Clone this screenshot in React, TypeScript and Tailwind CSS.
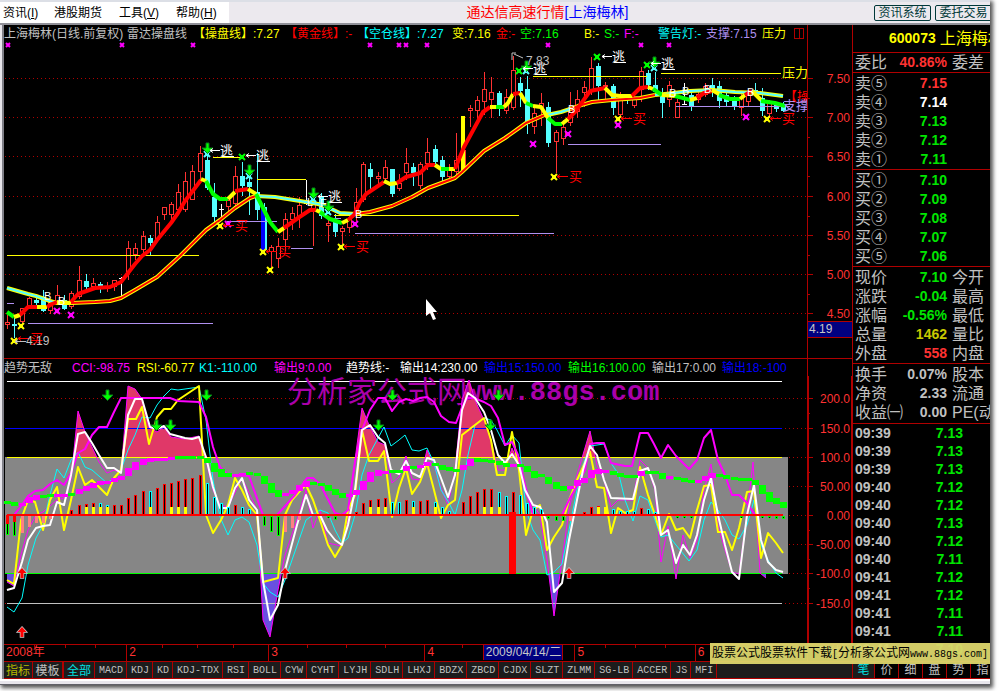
import type { ReactNode } from "react";
import clsx from "clsx";

const RED = "#b00000";
const CYAN = "#54ffff";
const GREEN = "#00ff00";
const YELLOW = "#ffff00";
const MAGENTA = "#ff00ff";
const PURPLE = "#b090f0";

type Bar = [kind: "r" | "c" | "w", high: number, top: number, bottom: number, low: number];

// one entry per trading day, in chart units
const candles: Bar[] = [
  ["r", 315, 322, 325, 329], ["c", 318, 324, 326, 338], ["r", 308, 308, 322, 325], ["r", 297, 298, 306, 308],
  ["c", 297, 300, 303, 306], ["c", 290, 297, 311, 312], ["r", 302, 302, 311, 314], ["r", 285, 295, 303, 303],
  ["c", 295, 300, 309, 310], ["r", 291, 293, 307, 309], ["r", 266, 280, 297, 299], ["c", 274, 281, 287, 289],
  ["r", 278, 283, 287, 289], ["c", 282, 284, 286, 293], ["r", 282, 286, 289, 292], ["r", 280, 280, 287, 291],
  ["w", 277, 278, 278, 298], ["r", 241, 248, 272, 280], ["r", 243, 248, 255, 260], ["r", 231, 236, 250, 255],
  ["c", 235, 238, 243, 255], ["r", 216, 222, 240, 240], ["r", 207, 207, 215, 220], ["r", 202, 204, 215, 220],
  ["r", 184, 192, 210, 212], ["r", 172, 181, 210, 212], ["r", 165, 171, 200, 200], ["r", 146, 153, 172, 180],
  ["c", 155, 160, 188, 190], ["c", 183, 197, 217, 222], ["w", 204, 209, 209, 218], ["r", 200, 200, 207, 212],
  ["r", 166, 176, 204, 207], ["c", 162, 176, 186, 196], ["c", 172, 182, 187, 215], ["c", 153, 192, 210, 220],
  ["c", 203, 207, 250, 251], ["r", 245, 247, 252, 267], ["r", 238, 246, 259, 268], ["r", 213, 219, 240, 251],
  ["r", 207, 213, 220, 230], ["r", 197, 205, 217, 228], ["w", 180, 203, 203, 205], ["r", 200, 202, 210, 246],
  ["c", 193, 197, 216, 219], ["r", 218, 223, 226, 242], ["c", 214, 220, 232, 237], ["r", 226, 228, 232, 244],
  ["r", 215, 218, 228, 233], ["r", 188, 202, 213, 221], ["r", 162, 164, 200, 202], ["c", 163, 169, 177, 192],
  ["r", 172, 176, 179, 184], ["r", 160, 167, 179, 184], ["c", 169, 169, 194, 197], ["r", 174, 183, 189, 191],
  ["r", 148, 163, 173, 180], ["c", 163, 167, 173, 186], ["r", 162, 164, 186, 189], ["r", 138, 152, 164, 170],
  ["c", 145, 149, 162, 164], ["c", 156, 160, 177, 181], ["r", 164, 168, 177, 179], ["r", 133, 160, 172, 176],
  ["r", 130, 150, 170, 172], ["r", 105, 108, 111, 127], ["r", 96, 100, 111, 121], ["r", 72, 89, 102, 115],
  ["r", 77, 92, 100, 118], ["c", 91, 93, 108, 116], ["r", 89, 97, 111, 114], ["r", 56, 70, 108, 110],
  ["c", 77, 83, 91, 107], ["c", 76, 89, 124, 134], ["r", 107, 113, 127, 134], ["r", 93, 103, 108, 126],
  ["c", 102, 107, 143, 147], ["r", 130, 132, 142, 173], ["r", 120, 127, 139, 145], ["r", 92, 110, 123, 126],
  ["r", 90, 99, 112, 118], ["r", 81, 87, 93, 107], ["r", 57, 68, 90, 95], ["c", 63, 66, 86, 102],
  ["r", 82, 85, 87, 99], ["c", 84, 86, 108, 115], ["r", 92, 98, 115, 118], ["c", 95, 97, 100, 104],
  ["r", 94, 97, 106, 108], ["r", 67, 71, 90, 102], ["c", 70, 73, 85, 90], ["c", 72, 85, 92, 96],
  ["c", 88, 93, 103, 118], ["r", 81, 85, 100, 107], ["r", 99, 102, 118, 118], ["w", 83, 104, 104, 105],
  ["c", 92, 95, 107, 111], ["r", 92, 94, 100, 103], ["r", 83, 86, 95, 97], ["c", 78, 85, 90, 97],
  ["c", 81, 86, 101, 108], ["c", 92, 95, 102, 107], ["c", 96, 98, 107, 110], ["r", 94, 98, 108, 116],
  ["r", 93, 95, 102, 106], ["c", 83, 90, 94, 97], ["c", 88, 98, 111, 116], ["r", 100, 103, 114, 118],
  ["c", 102, 105, 109, 112], ["c", 102, 105, 111, 112],
];

const fastLine: [string, string][] = [
  [GREEN, "7,312 14,317"], [YELLOW, "14,317 20,315"], ["red", "20,315 28,307 37,307"],
  [YELLOW, "37,307 47,307"], ["red", "47,307 52,304 57,302"], [YELLOW, "57,302 71,303"],
  ["red", "71,302 78,294 95,288 110,287 121,282 135,264 142,256 150,250 157,240 171,223 178,213 185,201 192,192 201,180"],
  [YELLOW, "201,179 206,181"], [GREEN, "206,181 213,194 220,199 228,199"], [YELLOW, "228,199 235,192"],
  ["red", "235,191 248,189"], [YELLOW, "248,189 256,194"], [GREEN, "256,194 263,208 270,222 278,232"],
  [YELLOW, "278,232 284,228"], ["red", "284,228 298,218 310,210 316,210"], [YELLOW, "316,210 320,212"],
  [GREEN, "320,212 330,219 342,223"], [YELLOW, "342,223 348,220"], ["red", "348,220 354,215 360,202 366,194 384,182"],
  [YELLOW, "384,181 390,184 397,183"], ["red", "397,183 406,177 420,173 428,165 435,165"], [YELLOW, "435,165 441,169"],
  [GREEN, "441,169 449,169"], [YELLOW, "449,169 455,169"], ["red", "455,169 464,147 483,112 490,107"],
  [YELLOW, "490,107 496,107"], [GREEN, "496,107 504,107"], [YELLOW, "504,107 508,103 513,94"], ["red", "513,94 520,93"],
  [YELLOW, "520,93 526,103"], [GREEN, "526,103 533,106"], [YELLOW, "533,106 541,107 548,118"],
  [GREEN, "548,118 555,124 562,124"], [YELLOW, "562,124 568,119"], ["red", "568,119 575,112 583,101 590,91 605,88"],
  [YELLOW, "605,88 612,95 620,96 632,96"], ["red", "632,96 640,88 648,87"], [YELLOW, "648,87 653,89"],
  [GREEN, "653,89 662,95"], [YELLOW, "662,95 675,96"], [GREEN, "675,96 683,98 690,100"], [YELLOW, "690,100 697,98"],
  ["red", "697,98 704,93 712,91"], [YELLOW, "712,90 719,94"], [GREEN, "719,95 730,99 740,99"], [YELLOW, "740,99 745,95"],
  ["red", "745,95 752,91"], [YELLOW, "752,91 761,100"], [GREEN, "761,101 775,103 785,106"],
];

const slowLine: [string, string][] = [
  [CYAN, "7,288 28,294 36,296 50,301 57,303 71,303"],
  ["red", "71,303 95,302 110,301 121,298 135,290 157,277 180,256 206,230 220,220 235,208 250,198 256,196"],
  [CYAN, "256,196 275,197 300,201 318,204 325,206 340,213 356,214"],
  ["red", "356,214 370,212 392,206 412,197 428,188 455,178 462,172 484,151 505,138 526,123 547,114"],
  [CYAN, "547,115 561,112 570,109"],
  ["red", "570,109 578,106 592,102 612,100 640,98 655,95"],
  [CYAN, "655,95 665,94 690,91 712,90 735,92 760,93 783,96"],
];

const levels: [string, number, number, number][] = [
  [YELLOW, 7, 199, 255], [PURPLE, 28, 213, 323], [PURPLE, 7, 14, 303], [YELLOW, 213, 242, 157],
  [YELLOW, 257, 306, 179], [PURPLE, 227, 277, 221], [PURPLE, 291, 313, 248], [PURPLE, 327, 341, 218],
  [YELLOW, 334, 519, 215], [PURPLE, 355, 554, 233], [PURPLE, 568, 661, 144], [YELLOW, 533, 647, 76],
  [YELLOW, 661, 781, 73], [PURPLE, 676, 790, 106],
];

const stars: [string, number, number][] = [
  [YELLOW, 14, 341], [YELLOW, 21, 326], [YELLOW, 220, 226], [YELLOW, 263, 252], [YELLOW, 270, 270],
  [YELLOW, 341, 247], [YELLOW, 554, 177], [YELLOW, 618, 119], [YELLOW, 767, 119],
  [MAGENTA, 57, 311], [MAGENTA, 71, 315], [MAGENTA, 228, 224], [MAGENTA, 355, 224], [MAGENTA, 533, 144],
  [MAGENTA, 568, 134], [MAGENTA, 618, 125], [MAGENTA, 746, 117],
  [GREEN, 242, 157], [GREEN, 519, 71], [GREEN, 597, 57], [GREEN, 647, 65],
  [CYAN, 207, 154], [CYAN, 249, 176], [CYAN, 313, 199], [CYAN, 328, 212], [CYAN, 526, 71], [CYAN, 654, 68],
];

const sells = [[220, 155], [256, 160], [328, 201], [533, 73], [612, 61], [661, 68]];
const buys = [[30, 343], [235, 230], [278, 256], [356, 251], [569, 181], [633, 123], [782, 123]];

const priceAxis: [string, number][] = [
  ["7.50", 78], ["7.00", 117], ["6.50", 156], ["6.00", 196], ["5.50", 235], ["5.00", 274], ["4.50", 313],
];

const trendAxis: [string, number][] = [
  ["200.0", 398], ["150.0", 428], ["100.0", 457], ["50.00", 486], ["0.00", 515],
  ["-50.00", 544], ["-100.0", 573], ["-150.0", 603],
];

const cci =
  "7,582 14,586 21,555 28,530 36,515 43,512 57,500 64,498 71,480 78,411 85,432 92,447 99,462 107,473 114,470 121,473 128,386 135,389 142,399 149,427 157,432 164,427 171,437 185,439 199,436 206,460 213,490 220,505 228,507 242,478 257,510 263,620 270,637 278,590 285,555 297,520 306,490 313,528 320,510 328,543 341,546 348,520 355,460 362,408 369,425 378,442 385,445 392,483 399,477 406,456 412,479 420,480 427,450 434,465 441,488 448,505 455,470 462,400 469,380 475,400 484,420 491,440 498,470 505,470 512,448 519,465 526,495 540,515 547,560 554,616 562,560 569,510 577,475 590,431 597,465 604,480 611,507 618,500 633,500 640,460 648,468 655,490 661,562 668,526 676,579 683,535 690,558 697,540 704,490 711,464 718,525 725,550 732,572 739,574 747,515 753,462 760,573 766,578";
const trendMagenta =
  "14,515 22,505 28,496 35,491 43,490 50,484 57,480 64,485 71,473 78,453 85,449 92,435 99,427 107,427 114,412 121,398 170,398 178,401 199,402 206,417 213,447 220,467 228,475 249,476 263,515 277,515 295,495 307,478 313,478 320,484 335,513 342,515 348,510 355,462 362,430 370,410 378,398 385,398 392,411 399,402 406,399 413,401 420,398 427,397 434,402 441,416 449,422 456,423 461,410 467,398 474,398 484,402 491,406 498,418 505,445 512,442 518,455 525,485 533,515 562,515 570,498 577,486 585,470 590,444 597,443 604,443 611,463 625,466 632,466 640,433 648,433 654,444 661,458 668,445 676,456 689,469 697,460 704,438 711,430 718,460 725,475 732,495 739,495 747,503 755,515";
const trendWhite =
  "7,590 14,588 22,562 28,540 36,528 43,526 50,525 57,502 64,505 71,475 78,434 85,432 92,443 99,455 107,468 114,468 121,473 128,415 135,399 142,399 150,427 157,429 164,426 170,434 185,438 192,439 199,437 206,457 213,487 220,508 228,508 235,488 242,478 249,500 257,510 263,581 270,620 278,605 285,570 297,525 306,495 313,515 320,515 327,530 335,540 342,545 348,525 355,490 362,430 370,425 378,437 385,443 391,470 399,474 406,461 412,473 420,477 427,458 434,460 441,478 448,497 455,475 462,410 468,393 475,398 484,412 491,430 498,455 505,463 512,454 519,465 525,490 533,505 540,507 547,522 554,592 562,583 569,540 577,500 583,470 590,446 597,455 604,480 611,498 633,499 640,471 648,468 655,487 661,535 668,530 676,563 683,545 690,555 697,535 704,500 711,478 718,515 725,545 732,572 739,579 747,515 754,485 761,540 768,562 776,570 783,572";
const trendYellow =
  "7,580 14,584 21,520 28,500 35,502 43,530 50,500 57,487 64,530 71,500 78,467 85,485 92,480 107,495 114,478 121,470 128,419 136,419 142,407 149,444 157,417 164,409 171,409 178,400 199,386 206,515 213,533 221,520 228,505 235,478 242,490 249,505 257,515 263,582 278,578 285,515 292,500 299,492 306,485 313,500 320,520 328,545 335,557 342,545 348,510 355,495 362,430 369,461 378,461 384,451 392,517 399,488 406,468 412,494 420,482 427,463 434,490 441,518 448,505 455,500 462,435 475,425 484,418 491,440 497,475 505,475 512,432 519,470 526,535 533,510 540,505 547,550 554,537 562,525 569,500 577,480 590,452 597,487 604,488 611,533 618,508 625,513 633,510 640,467 648,495 655,515 661,535 669,514 676,530 683,528 690,538 697,510 704,486 711,485 718,532 725,532 732,550 739,528 747,492 754,491 761,558 768,533 776,543 783,553";
const trendCyan =
  "7,607 14,612 22,598 28,565 36,538 43,525 50,495 57,469 64,478 71,460 78,452 85,467 92,470 100,477 107,483 114,478 121,470 128,450 135,435 142,417 150,418 157,405 164,396 171,389 178,390 199,387 206,420 213,480 220,517 228,535 235,520 242,517 249,522 257,545 263,583 270,592 278,597 285,580 292,560 299,540 306,520 313,515 320,510 328,513 335,530 342,543 348,538 355,515 362,475 369,455 384,427 391,446 399,440 405,435 412,450 419,451 427,448 434,463 441,490 449,503 455,515 462,490 468,455 475,425 484,418 491,420 497,430 505,446 512,435 519,443 526,510 533,530 540,540 547,575 554,572 562,564 569,530 577,490 583,465 590,446 604,444 611,463 619,475 625,500 633,521 640,496 648,500 655,520 661,537 668,535 676,545 689,561 697,550 704,520 711,502 718,510 725,520 732,535 739,539 747,525 754,500 761,545 768,560 776,573 783,578";

// stepped band: g/m for the colour, then the centre line
const band =
  "g502 g504 m504 m500 m497 g496 g495 m495 m495 g494 m491 m488 m485 m483 m482 m480 m478 m472 m466 m462 m460 m459 m459 m458 g457 g457 g457 g457 g460 g467 g473 g475 m475 m474 g473 g474 g480 g488 g493 m494 m492 m488 m484 g483 g484 g488 g492 g495 m495 m492 m485 m477 m473 m472 g471 g471 m468 g467 m466 m464 g464 g467 g469 g470 m467 m462 g460 g460 g461 g463 g465 m465 g465 g469 g474 g475 g480 g485 g488 m487 m483 m480 m474 m471 m471 g473 g475 g476 g476 m473 g472 g472 g476 m477 g478 g480 g481 m481 m478 m475 g475 g477 g478 g479 g479 g482 g489 g497 g501 g505".split(" ");

// day index, end of the bar, colour key (upper case puts a yellow foot on it)
const histogram: [number, number, string][] = [
  [0, 535, "g"], [1, 536, "g"], [2, 533, "p"], [3, 527, "p"], [4, 523, "p"], [5, 523, "p"], [6, 519, "p"],
  [9, 510, "r"], [10, 505, "r"], [11, 504, "R"], [12, 503, "R"], [13, 503, "C"], [14, 505, "C"], [15, 505, "r"],
  [16, 505, "r"], [17, 498, "r"], [18, 495, "r"], [19, 491, "r"], [20, 491, "C"], [21, 488, "r"], [22, 484, "r"],
  [23, 483, "R"], [24, 481, "R"], [25, 479, "R"], [26, 478, "r"], [27, 475, "r"], [28, 483, "c"], [29, 497, "c"],
  [30, 503, "c"], [31, 507, "c"], [32, 505, "r"], [33, 507, "c"], [34, 509, "c"], [36, 526, "g"], [37, 532, "g"],
  [38, 536, "g"], [39, 532, "p"], [40, 528, "p"], [41, 520, "p"], [45, 518, "g"], [46, 520, "g"], [49, 512, "r"],
  [50, 503, "r"], [51, 500, "R"], [52, 499, "R"], [53, 498, "R"], [54, 502, "c"], [55, 502, "c"], [56, 500, "r"],
  [57, 501, "C"], [58, 501, "r"], [59, 500, "r"], [60, 502, "C"], [61, 507, "c"], [62, 511, "c"], [64, 502, "r"],
  [65, 496, "r"], [66, 492, "r"], [67, 489, "R"], [68, 489, "R"], [69, 492, "C"], [70, 496, "c"], [71, 492, "r"],
  [72, 495, "c"], [73, 503, "c"], [74, 507, "c"], [75, 509, "c"], [76, 519, "g"], [77, 521, "g"], [78, 521, "g"],
  [79, 521, "p"], [81, 512, "r"], [82, 507, "r"], [83, 506, "R"], [84, 507, "R"], [85, 509, "c"], [86, 511, "c"],
  [87, 511, "c"], [88, 511, "c"], [89, 508, "r"], [90, 509, "c"], [91, 512, "c"], [94, 518, "g"], [95, 518, "g"],
  [96, 518, "g"], [103, 518, "g"], [106, 518, "g"], [107, 518, "g"], [108, 519, "g"], [109, 519, "g"],
];

const barColors: Record<string, string> = { r: "red", c: "cyan", g: GREEN, p: "#ff8080" };

const dayX = (i: number) => Math.round(7.3 + 7.12 * i);

function Star({ x, y, color, r = 3 }: { x: number; y: number; color: string; r?: number }) {
  return (
    <g stroke={color} fill={color}>
      <path d={`M${x - r} ${y - r}L${x + r} ${y + r}M${x + r} ${y - r}L${x - r} ${y + r}`} strokeWidth={2} />
      <rect x={x - r + 1} y={y - r + 1} width={r * 2 - 2} height={r * 2 - 2} stroke="none" />
    </g>
  );
}

function DownArrow({ x, y }: { x: number; y: number }) {
  return (
    <path
      d={`M${x - 1} ${y - 5}h3v5h4l-5.5 5.5l-5.5 -5.5h4z`}
      fill={GREEN}
      stroke="#087a18"
      strokeWidth={1}
    />
  );
}

function UpArrow({ x, y }: { x: number; y: number }) {
  return (
    <path
      d={`M${x} ${y - 5}l4.5 5h-3v5h-3v-5h-3z`}
      fill="red"
      stroke="#c8c8c8"
      strokeWidth={1.5}
      paintOrder="stroke"
    />
  );
}

function Pointer({ x1, x2, y, color }: { x1: number; x2: number; y: number; color: string }) {
  return (
    <path
      d={`M${x2} ${y + 0.5}H${x1}M${x1 + 3} ${y - 1.5}L${x1} ${y + 0.5}L${x1 + 3} ${y + 2.5}`}
      stroke={color}
      fill="none"
    />
  );
}

function Axis({ marks, bottom, top }: { marks: [string, number][]; bottom: number; top: number }) {
  return (
    <g>
      {marks.map(([label, y], i) => (
        <g key={label}>
          <path d={`M5 ${y + 0.5}H807`} stroke={RED} strokeDasharray="1 3" />
          <path d={`M807 ${y + 0.5}h6`} stroke={RED} />
          {i > 0 && <path d={`M807 ${Math.round((y + marks[i - 1][1]) / 2) + 0.5}h3`} stroke={RED} />}
          <text x={850} y={y + 5} textAnchor="end" fill="#ff3232" fontSize={12}>
            {label}
          </text>
        </g>
      ))}
      <path d={`M807.5 ${top}V${bottom}`} stroke={RED} />
    </g>
  );
}

function PriceChart() {
  return (
    <svg viewBox="4 42 848 316" className="block w-full">
      <clipPath id="plot">
        <rect x={4} y={42} width={803} height={316} />
      </clipPath>
      <Axis marks={priceAxis} top={42} bottom={358} />
      <g shapeRendering="crispEdges">
        {candles.map(([kind, high, top, bottom, low], i) => {
          const x = dayX(i);
          if (kind === "w")
            return <path key={i} d={`M${x + 0.5} ${high}V${low}M${x - 2} ${top + 0.5}h5`} stroke="white" />;
          const color = kind === "r" ? "#ff3232" : CYAN;
          return (
            <g key={i} stroke={color}>
              <path d={`M${x + 0.5} ${high}V${top}M${x + 0.5} ${bottom}V${low}`} />
              <rect
                x={x - 1.5}
                y={top + 0.5}
                width={4}
                height={Math.max(bottom - top - 1, 1)}
                fill={kind === "r" ? "black" : color}
              />
            </g>
          );
        })}
        <rect x={261} y={207} width={4} height={43} fill="blue" />
        <rect x={461} y={116} width={4} height={56} fill={YELLOW} />
        {levels.map(([color, x1, x2, y]) => (
          <path key={`${x1}-${y}`} d={`M${x1} ${y + 0.5}H${x2}`} stroke={color} />
        ))}
      </g>
      <g fill="none" strokeLinejoin="round">
        {slowLine.map(([color, points]) => (
          <g key={points}>
            <polyline points={points} stroke={YELLOW} strokeWidth={4} />
            <polyline points={points} stroke={color} strokeWidth={2} />
          </g>
        ))}
        {fastLine.map(([color, points]) => (
          <polyline key={points} points={points} stroke={color} strokeWidth={4} />
        ))}
      </g>
      {[8, 122, 193, 370, 399, 406, 427, 548, 641, 669].map((x) => (
        <Star key={x} x={x} y={45} color={MAGENTA} r={2} />
      ))}
      {stars.map(([color, x, y]) => (
        <Star key={`${x}-${y}`} x={x} y={y} color={color} />
      ))}
      {[[207, 148], [249, 170], [313, 193], [328, 206], [526, 66], [654, 62]].map(([x, y]) => (
        <DownArrow key={x} x={x} y={y} />
      ))}
      <path d="M512 60V53h4M514 54l9 4" stroke="#c0c0c0" fill="none" />
      <g fontSize={13}>
        {sells.map(([x, y]) => (
          <g key={x}>
            <Pointer x1={x - 10} x2={x} y={y - 5} color="white" />
            <text x={x} y={y} fill="white">逃</text>
            <path d={`M${x + 2} ${y + 1.5}h12`} stroke="white" />
          </g>
        ))}
        {buys.map(([x, y]) => (
          <g key={x} clipPath="url(#plot)">
            <Pointer x1={x - 12} x2={x - 1} y={y - 5} color="red" />
            <text x={x} y={y} fill="red">买</text>
          </g>
        ))}
        <g clipPath="url(#plot)">
          <text x={782} y={77} fill={YELLOW}>压力</text>
          <text x={784} y={101} fill="red">【操</text>
          <text x={783} y={110} fill={PURPLE}>支撑</text>
        </g>
      </g>
      <Pointer x1={15} x2={26} y={341} color="#c0c0c0" />
      <g fontSize={12} fill="#c0c0c0">
        <text x={26} y={345}>4.19</text>
        <text x={526} y={65}>7.83</text>
      </g>
      <g fontSize={11} fill="white">
        {[[44, 300], [58, 305], [355, 218], [568, 113], [669, 97], [682, 95], [704, 93], [747, 96]].map(([x, y]) => (
          <text key={x} x={x} y={y}>B</text>
        ))}
        <text x={307} y={206}>L</text>
        <text x={320} y={207}>F</text>
      </g>
      <rect x={807.5} y={321.5} width={45} height={16} fill="#000080" stroke={RED} />
      <text x={809} y={333} fontSize={12} fill="#c8c8c8">4.19</text>
      <path d="M426 299v17l4 -3l3 7l3 -1l-3 -7h4z" fill="white" />
    </svg>
  );
}

function TrendChart() {
  return (
    <svg viewBox="4 376 848 268" className="block w-full">
      <clipPath id="over">
        <rect x={4} y={376} width={803} height={81} />
      </clipPath>
      <clipPath id="under">
        <rect x={4} y={573} width={803} height={71} />
      </clipPath>
      <Axis marks={trendAxis} top={376} bottom={644} />
      <path d="M808.5 376V644M851.5 376V644" stroke={RED} />
      <rect x={5} y={457} width={783} height={117} fill="#868686" />
      <polygon points={`7,457 ${cci} 766,457`} fill="#e03868" clipPath="url(#over)" />
      <polygon points={`7,573 ${cci} 766,573`} fill="#6850e0" clipPath="url(#under)" />
      <g strokeWidth={1} shapeRendering="crispEdges">
        <path d="M7 381.5H782" stroke="white" />
        <path d="M5 428.5H782" stroke="blue" />
        <path d="M7 457.5H782" stroke={YELLOW} />
        <path d="M5 573.5H782" stroke={GREEN} />
        <path d="M7 603.5H782" stroke="#c0c0c0" />
      </g>
      <g fill="#aa00aa">
        <text x={287} y={402} fontSize={30}>分析家公式网</text>
        <text x={465} y={400} fontSize={27} fontWeight={700} className="font-['Liberation_Mono',monospace]">
          www.88gs.com
        </text>
      </g>
      <g fill="none" strokeLinejoin="round">
        <polyline points={cci} stroke={MAGENTA} />
        <polyline points={trendCyan} stroke="cyan" />
        <polyline points={trendYellow} stroke={YELLOW} strokeWidth={2} />
        <polyline points={trendMagenta} stroke={MAGENTA} strokeWidth={2} />
        <polyline points={trendWhite} stroke="white" strokeWidth={2} />
      </g>
      <g shapeRendering="crispEdges">
        {band.map((step, i) => {
          const y = Number(step.slice(1));
          const prev = i ? Number(band[i - 1].slice(1)) : y;
          const h = Math.max(3, Math.abs(y - prev) + 2);
          return (
            <rect
              key={i}
              x={dayX(i) - 3}
              y={y - Math.floor(h / 2)}
              width={7}
              height={h}
              fill={step[0] === "g" ? GREEN : MAGENTA}
            />
          );
        })}
        {histogram.map(([day, end, key]) => {
          const x = dayX(day);
          const color = barColors[key.toLowerCase()];
          const top = Math.min(end, 516);
          return (
            <g key={day}>
              <rect x={x - 1} y={top} width={3} height={Math.abs(end - 516)} fill={color} />
              {key !== "p" && (
                <rect x={x} y={top + 1} width={1} height={Math.max(Math.abs(end - 516) - 2, 1)} fill="black" />
              )}
              {key !== key.toLowerCase() && <rect x={x - 1} y={Math.max(end, 507)} width={3} height={9} fill={YELLOW} />}
            </g>
          );
        })}
        <path d="M7 515H783" stroke="red" strokeWidth={2} />
        <rect x={509} y={512} width={7} height={62} fill="red" />
        <rect x={6} y={515} width={3} height={9} fill="red" />
        <rect x={13} y={515} width={3} height={7} fill="red" />
      </g>
      {[[107, 395], [156, 425], [170, 425], [206, 395], [392, 395], [378, 425], [498, 395], [490, 425]].map(([x, y]) => (
        <DownArrow key={x} x={x} y={y} />
      ))}
      {[[22, 573], [285, 573], [569, 573], [22, 632]].map(([x, y]) => (
        <UpArrow key={`${x}-${y}`} x={x} y={y} />
      ))}
    </svg>
  );
}

function Legend({ children }: { children: ReactNode }) {
  return (
    <div className="flex h-[17px]">
      <div className="flex flex-1 items-center overflow-hidden whitespace-nowrap">{children}</div>
      <div className="w-[45px] shrink-0 border-l border-[#b00000]" />
    </div>
  );
}

const months: [string, string][] = [
  ["2008年", "flex-[123]"],
  ["2", "flex-[142]"],
  ["3", "flex-[156]"],
  ["4", "flex-[150]"],
  ["5", "flex-[120]"],
  ["6", "flex-[112]"],
];

const indicators = [
  "MACD", "KDJ", "KD", "KDJ-TDX", "RSI", "BOLL", "CYW", "CYHT", "LYJH", "SDLH", "LHXJ", "BDZX", "ZBCD",
  "CJDX", "SLZT", "ZLMM", "SG-LB", "ACCER", "JS", "MFI",
];

type Quote = [label: string, value: string, color: string, second?: string];

const up = "text-[#ff3232]";
const down = "text-[#00e600]";
const flat = "text-[#c0c0c0]";

const quotes: Quote[][] = [
  [["委比", "40.86%", up, "委差"]],
  [["卖⑤", "7.15", up], ["卖④", "7.14", "text-white"], ["卖③", "7.13", down], ["卖②", "7.12", down], ["卖①", "7.11", down]],
  [["买①", "7.10", down], ["买②", "7.09", down], ["买③", "7.08", down], ["买④", "7.07", down], ["买⑤", "7.06", down]],
  [
    ["现价", "7.10", down, "今开"],
    ["涨跌", "-0.04", down, "最高"],
    ["涨幅", "-0.56%", down, "最低"],
    ["总量", "1462", "text-[#c8c800]", "量比"],
    ["外盘", "558", up, "内盘"],
  ],
  [["换手", "0.07%", flat, "股本"], ["净资", "2.33", flat, "流通"], ["收益㈠", "0.00", flat, "PE(动)"]],
];

const ticks = [
  ["09:39", "7.13"], ["09:39", "7.13"], ["09:39", "7.13"], ["09:40", "7.12"], ["09:40", "7.12"],
  ["09:40", "7.13"], ["09:40", "7.12"], ["09:40", "7.11"], ["09:41", "7.12"], ["09:41", "7.12"],
  ["09:41", "7.11"], ["09:41", "7.11"], ["09:41", "7.10"],
];

function QuotePanel() {
  return (
    <aside className="flex w-[138px] shrink-0 flex-col overflow-hidden border-l border-[#b00000] text-[#c0c0c0]">
      <div className="flex h-[28px] items-center gap-1 border-b border-[#b00000] pl-[36px] whitespace-nowrap text-[#ffff00]">
        <span className="text-[14px] font-bold">600073</span>
        <span className="text-[16px]">上海梅林</span>
      </div>
      {quotes.map((rows, i) => (
        <table
          key={i}
          className={clsx(
            "w-[180px] table-fixed border-separate border-spacing-0 border-b border-[#b00000]",
            i > 0 && "pt-px",
            i === 4 && "pb-px",
          )}
        >
          <tbody>
            {rows.map(([label, value, color, second]) => (
              <tr key={label} className="h-[19px] text-[16px] leading-[19px] whitespace-nowrap">
                <th className="w-[40px] p-0 pl-[2px] text-left font-normal">{label}</th>
                <td className={clsx("w-[54px] p-0 text-right text-[14px] font-bold", color)}>{value}</td>
                <td className="p-0 pl-[5px]">{second}</td>
              </tr>
            ))}
          </tbody>
        </table>
      ))}
      <div className="h-0 flex-1 overflow-hidden">
        <table className="w-[137px] table-fixed text-[14px] font-bold">
          <tbody>
            {ticks.map(([time, price], i) => (
              <tr key={i} className="h-[18px] leading-[18px]">
                <td className="w-[50px] p-0 pl-[2px]">{time}</td>
                <td className="w-[60px] p-0 text-right text-[#00e600]">{price}</td>
                <td />
              </tr>
            ))}
          </tbody>
        </table>
      </div>
      <div className="flex h-[18px] border-y border-[#b00000] text-[12px]">
        {["笔", "价", "细", "盘", "势", "指"].map((tab, i) => (
          <button
            key={tab}
            type="button"
            className={clsx(
              "shrink-0 border-r border-[#b00000] leading-[16px]",
              i === 0 ? "w-[22px] bg-[#1c1c1c] text-[#00e0e0]" : "w-[24px] text-[#c0c0c0]",
            )}
          >
            {tab}
          </button>
        ))}
      </div>
    </aside>
  );
}

export default function App() {
  return (
    <div className="bg-white pr-[10px] pb-[7px] font-['Liberation_Sans','Noto_Sans_CJK_SC',sans-serif] text-[12px]">
      <div className="relative overflow-hidden bg-[#e8e6ec] shadow-[2px_2px_4px_1px_#555]">
        {/* Menu bar */}
        <header className="flex h-[25px] items-center border-t-2 border-b-2 border-t-[#dcdfe6] border-b-[#909098] bg-[#ece9ee]">
          <nav className="flex h-full w-[229px] items-center bg-white pl-[3px] whitespace-nowrap text-black">
            <button type="button" className="w-[51px] text-left">资讯(<u>I</u>)</button>
            <button type="button" className="w-[65px] text-left">港股期货</button>
            <button type="button" className="w-[57px] text-left">工具(<u>V</u>)</button>
            <button type="button" className="text-left">帮助(<u>H</u>)</button>
          </nav>
          <h1 className="flex-1 pr-2 text-center text-[14px] whitespace-nowrap">
            <span className="text-[#ff0000]">通达信高速行情</span>
            <span className="text-[#0000ff]">[上海梅林]</span>
          </h1>
          <div className="flex w-[116px] gap-1 overflow-hidden whitespace-nowrap text-[#003838]">
            <button type="button" className="h-[16px] w-[57px] shrink-0 rounded-xs border border-[#003838] leading-[14px]">
              资讯系统
            </button>
            <button type="button" className="h-[16px] w-[57px] shrink-0 rounded-xs border border-[#003838] leading-[14px]">
              委托交易
            </button>
          </div>
        </header>

        <div className="pl-[2px]">
          <div className="flex border-l-2 border-[#808088] bg-black">
            <main className="min-w-0 flex-1">
              <Legend>
                <span className="w-[123px] text-[#c0c0c0]">上海梅林(日线.前复权)</span>
                <span className="w-[66px] text-[#c0c0c0]">雷达操盘线</span>
                <span className="w-[92px] text-[#ffff00]">【操盘线】:7.27</span>
                <span className="w-[72px] text-[#ff0000]">【黄金线】:-</span>
                <span className="w-[95px] text-[#00ffff]">【空仓线】:7.27</span>
                <span className="w-[44px] text-[#ffff00]">变:7.16</span>
                <span className="w-[24px] text-[#ff0000]">金:-</span>
                <span className="w-[64px] text-[#00ff00]">空:7.16</span>
                <span className="w-[20px] text-[#ffff00]">B:-</span>
                <span className="w-[20px] text-[#00ff00]">S:-</span>
                <span className="w-[34px] text-[#ff00ff]">F:-</span>
                <span className="w-[48px] text-[#00ffff]">警告灯:-</span>
                <span className="w-[56px] text-[#b090f0]">支撑:7.15</span>
                <span className="w-[32px] text-[#ffff00]">压力</span>
                <span className="flex h-[11px] w-[10px] justify-end border border-[#b00000]">
                  <span className="w-[4px] border-l border-[#b00000]" />
                </span>
              </Legend>
              <PriceChart />

              <section className="border-y border-[#b00000]">
                <Legend>
                  <span className="w-[68px] text-[#c0c0c0]">趋势无敌</span>
                  <span className="w-[65px] text-[#ff00ff]">CCI:-98.75</span>
                  <span className="w-[62px] text-[#ffff00]">RSI:-60.77</span>
                  <span className="w-[75px] text-[#00ffff]">K1:-110.00</span>
                  <span className="w-[72px] text-[#ff00ff]">输出9:0.00</span>
                  <span className="w-[54px] text-white">趋势线:-</span>
                  <span className="w-[84px] text-white">输出14:230.00</span>
                  <span className="w-[84px] text-[#0000ff]">输出15:150.00</span>
                  <span className="w-[84px] text-[#00ff00]">输出16:100.00</span>
                  <span className="w-[70px] text-[#c0c0c0]">输出17:0.00</span>
                  <span className="text-[#0000ff]">输出18:-100</span>
                </Legend>
                <TrendChart />
              </section>

              {/* Date axis */}
              <div className="flex h-[16px] leading-[15px] text-[#ff3232]">
                {months.map(([label, size]) => (
                  <div key={label} className={clsx("relative flex justify-between border-r border-[#b00000]", size)}>
                    <span className="pl-[2px]">{label}</span>
                    <div className="absolute inset-x-0 top-0 flex justify-evenly">
                      <span className="h-[3px] w-px bg-[#b00000]" />
                      <span className="h-[3px] w-px bg-[#b00000]" />
                      <span className="h-[3px] w-px bg-[#b00000]" />
                    </div>
                    {label === "4" && (
                      <span className="relative mr-[11px] h-[15px] w-[80px] border-x border-[#b00000] bg-[#000080] text-center whitespace-nowrap text-[#c8c8c8]">
                        2009/04/14/二
                      </span>
                    )}
                  </div>
                ))}
                <div className="w-[44px] text-center text-[#c0c0c0]">日线</div>
              </div>

              {/* Indicator tabs */}
              <div className="flex h-[18px] overflow-hidden border-y border-[#b00000] bg-[#1c1c1c] whitespace-nowrap text-[#c0c0c0]">
                <button type="button" className="w-[29px] border-r border-[#b00000] text-[#b8b800]">指标</button>
                <button type="button" className="w-[31px] border-r-2 border-[#b00000]">模板</button>
                <button type="button" className="w-[31px] border-r border-[#b00000] text-[#00e0e0]">全部</button>
                {indicators.map((name) => (
                  <button
                    key={name}
                    type="button"
                    className="border-r border-[#b00000] pr-[3px] pl-1 font-['Liberation_Mono',monospace] text-[10px]"
                  >
                    {name}
                  </button>
                ))}
              </div>
            </main>
            <QuotePanel />
          </div>
        </div>

        <footer className="h-[6px] border-t-2 border-b border-t-white border-b-[#606068] bg-[#e8e6ec]" />

        <p className="absolute right-0 bottom-[21px] h-[21px] w-[280px] bg-[#dcd66c]/95 pl-[2px] leading-[21px] whitespace-nowrap text-black">
          股票公式股票软件下载
          <span className="font-['Liberation_Mono',monospace] text-[10px]">[</span>
          分析家公式网
          <span className="font-['Liberation_Mono',monospace] text-[10px]">www.88gs.com]</span>
        </p>
      </div>
    </div>
  );
}
